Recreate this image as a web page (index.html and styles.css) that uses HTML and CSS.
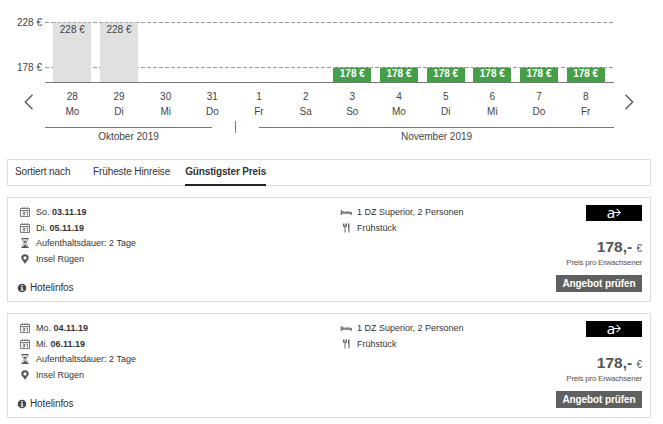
FILE: index.html
```html
<!DOCTYPE html>
<html lang="de">
<head>
  <meta charset="UTF-8">
  <meta name="viewport" content="width=device-width, initial-scale=1.0">
  <title>Preisübersicht</title>
  <link rel="stylesheet" href="styles.css">
</head>
<body>
  <!-- icons -->
  <svg class="sprite">
    <symbol id="calendar" viewBox="0 0 10 10">
      <path d="M.5 1.5h9v8h-9zM.5 3.5h9M2.5 0v2M5 0v2M7.5 0v2M2.5 5h2v3h-2M3 6.5h1.5M5.5 5h2v3.5" fill="none" stroke="#707070" stroke-width=".9"/>
    </symbol>
    <symbol id="hourglass" viewBox="0 0 10 10">
      <path d="M1.5 .7h7M1.5 9.3h7" stroke="#555" stroke-width="1.3"/>
      <path d="M2.5 1v1.5L4.4 5 2.5 7.5V9M7.5 1v1.5L5.6 5l1.9 2.5V9" fill="none" stroke="#777" stroke-width=".8"/>
      <path d="M3 2.7h4L5 5.2zM5 6l2 3H3z" fill="#555"/>
    </symbol>
    <symbol id="pin" viewBox="0 0 10 10">
      <path fill-rule="evenodd" d="M5 .3a3.7 3.7 0 0 0-3.7 3.7C1.3 6 4 7.5 5 9.9 6 7.5 8.7 6 8.7 4A3.7 3.7 0 0 0 5 .3zM5 2.3a1.6 1.6 0 1 1 0 3.2 1.6 1.6 0 0 1 0-3.2z" fill="#555"/>
    </symbol>
    <symbol id="info" viewBox="0 0 10 10">
      <circle cx="5" cy="5" r="4.3" fill="#4a4a4a"/>
      <path d="M4.3 2h1.5v1.3H4.3zM3.8 4.2h2v2.8h.6v.8H3.8V7h.6V5h-.6z" fill="#fff"/>
    </symbol>
    <symbol id="bed" viewBox="0 0 12 10">
      <path d="M1.3 3v5M11.2 5v3M.8 6.2h10.4" fill="none" stroke="#666" stroke-width="1.2"/>
      <path d="M1.5 4.2h2.5v1.5H1.5zM4.3 4.5h6l.9 1.2H4.3z" fill="#777"/>
    </symbol>
    <symbol id="meal" viewBox="0 0 10 10">
      <path d="M2.5 .5v3M4 .5v3M5.5 .5v3M2.5 3.5h3M4 3.5V9.500" fill="none" stroke="#666" stroke-width="1"/>
      <path d="M7 .5h1.5v9H7.4V5.5H7z" fill="#666"/>
    </symbol>
    <symbol id="logo-arrow" viewBox="0 0 8 10">
      <path d="M0 5h6.8M3 .8L7.2 5 3 9.2" fill="none" stroke="#fff" stroke-width="1.2"/>
    </symbol>
  </svg>

  <section class="chart">
    <div class="scale"><span>228 €</span><span>178 €</span></div>
    <div class="plot">
      <div class="col"><div class="bar high">228 €</div></div>
      <div class="col"><div class="bar high">228 €</div></div>
      <div class="col"></div>
      <div class="col"></div>
      <div class="col"></div>
      <div class="col"></div>
      <div class="col"><div class="bar best">178 €</div></div>
      <div class="col"><div class="bar best">178 €</div></div>
      <div class="col"><div class="bar best">178 €</div></div>
      <div class="col"><div class="bar best">178 €</div></div>
      <div class="col"><div class="bar best">178 €</div></div>
      <div class="col"><div class="bar best">178 €</div></div>
    </div>
    <svg class="arrow prev" viewBox="0 0 10 16"><path d="M8.5 .8L1.3 8l7.2 7.2"/></svg>
    <div class="days">
      <div>28<br>Mo</div>
      <div>29<br>Di</div>
      <div>30<br>Mi</div>
      <div>31<br>Do</div>
      <div>1<br>Fr</div>
      <div>2<br>Sa</div>
      <div>3<br>So</div>
      <div>4<br>Mo</div>
      <div>5<br>Di</div>
      <div>6<br>Mi</div>
      <div>7<br>Do</div>
      <div>8<br>Fr</div>
    </div>
    <svg class="arrow next" viewBox="0 0 10 16"><path d="M1.5 .8L8.7 8l-7.2 7.2"/></svg>
    <div class="months">
      <div class="month">Oktober 2019</div>
      <div class="divider"></div>
      <div class="month">November 2019</div>
    </div>
  </section>

  <nav class="sort">
    <span class="sort-label">Sortiert nach</span>
    <a class="tab">Früheste Hinreise</a>
    <a class="tab active">Günstigster Preis</a>
  </nav>

  <article class="offer">
    <div class="travel">
      <ul class="list">
        <li><svg class="icon"><use href="#calendar"/></svg><span>So. <b>03.11.19</b></span></li>
        <li><svg class="icon"><use href="#calendar"/></svg><span>Di. <b>05.11.19</b></span></li>
        <li><svg class="icon"><use href="#hourglass"/></svg><span>Aufenthaltsdauer: 2 Tage</span></li>
        <li><svg class="icon"><use href="#pin"/></svg><span>Insel Rügen</span></li>
      </ul>
      <a class="hotel"><svg class="icon"><use href="#info"/></svg>Hotelinfos</a>
    </div>
    <ul class="list room">
      <li><svg class="icon wide"><use href="#bed"/></svg><span>1 DZ Superior, 2 Personen</span></li>
      <li><svg class="icon wide"><use href="#meal"/></svg><span>Frühstück</span></li>
    </ul>
    <div class="price">
      <div class="logo">a<svg><use href="#logo-arrow"/></svg></div>
      <div class="amount">178,- <small>€</small></div>
      <div class="per">Preis pro Erwachsener</div>
      <a class="button">Angebot prüfen</a>
    </div>
  </article>

  <article class="offer">
    <div class="travel">
      <ul class="list">
        <li><svg class="icon"><use href="#calendar"/></svg><span>Mo. <b>04.11.19</b></span></li>
        <li><svg class="icon"><use href="#calendar"/></svg><span>Mi. <b>06.11.19</b></span></li>
        <li><svg class="icon"><use href="#hourglass"/></svg><span>Aufenthaltsdauer: 2 Tage</span></li>
        <li><svg class="icon"><use href="#pin"/></svg><span>Insel Rügen</span></li>
      </ul>
      <a class="hotel"><svg class="icon"><use href="#info"/></svg>Hotelinfos</a>
    </div>
    <ul class="list room">
      <li><svg class="icon wide"><use href="#bed"/></svg><span>1 DZ Superior, 2 Personen</span></li>
      <li><svg class="icon wide"><use href="#meal"/></svg><span>Frühstück</span></li>
    </ul>
    <div class="price">
      <div class="logo">a<svg><use href="#logo-arrow"/></svg></div>
      <div class="amount">178,- <small>€</small></div>
      <div class="per">Preis pro Erwachsener</div>
      <a class="button">Angebot prüfen</a>
    </div>
  </article>
</body>
</html>
```
FILE: styles.css
```css
*{
  box-sizing: border-box;
}
body{
  margin: 0; padding: 0 12px 0 7px;
  font-family: "Liberation Sans", Arial, sans-serif;
  font-size: 9px; color: #333;
  background-color: #fff;
}
.sprite{
  display: none;
}

/* price chart */
.chart{
  display: grid; grid-template-columns: 38px 569px 37px;
  grid-template-rows: 61px 38px 24px;
  padding-top: 22px; height: 159px;
  font-size: 10px; color: #444;
}
.scale{
  display: flex; flex-direction: column; gap: 33px;
  margin-top: -5px; padding-right: 3px;
  line-height: 12px; text-align: right;
}
.plot{
  display: grid; grid-template-columns: repeat(12, 1fr);
  grid-column: 2 / 4; width: 569px; height: 61px; padding: 0 5px 0 4px;
  border-bottom: 1px solid #777;
  background:
    repeating-linear-gradient(90deg, #999 0 4px, #fff 4px 6px) 0 0 / 100% 1px no-repeat,
    repeating-linear-gradient(90deg, #999 0 4px, #fff 4px 6px) 0 45px / 100% 1px no-repeat;
}
.col{
  display: flex; align-items: flex-end; justify-content: center;
}
.bar{
  width: 38px; text-align: center;
}
.high{
  height: 60px; line-height: 13px;
  background-color: #e0e0e0; border-top: 1px dashed #aaa;
}
.best{
  height: 15px; line-height: 12px;
  font-weight: bold; color: #fff;
  background-color: #43a047; border-top: 1px dashed #9bbf9d;
}
.arrow{
  width: 10px; height: 16px; margin-top: 11px;
  fill: none; stroke: #555; stroke-width: 1.3;
}
.prev{
  margin-left: 17px;
}
.next{
  margin-left: 10px;
}
.days{
  display: grid; grid-template-columns: repeat(12, 1fr);
  padding: 6px 5px 0 4px; line-height: 15px; text-align: center;
}
.months{
  display: flex; grid-column: 2; align-items: flex-start;
}
.month{
  flex: 0 0 355px; margin-top: 6px; padding-top: 3px;
  border-top: 1px solid #777;
  line-height: 12px; text-align: center;
}
.month:first-child{
  flex-basis: 167px;
}
.divider{
  width: 1px; height: 12px; margin: 0 23px;
  background-color: #777;
}

/* sorting */
.sort{
  display: flex; height: 27px; padding-left: 7px;
  border: 1px solid #ddd;
  font-size: 10px; line-height: 24px; letter-spacing: -0.1px;
}
.sort-label{
  width: 78px;
}
.tab{
  height: 26px; margin-right: 15px;
}
.active{
  font-weight: bold; letter-spacing: -0.15px;
  border-bottom: 2px solid #222;
}

/* offers */
.offer{
  display: flex; height: 105px; margin-top: 11px;
  border: 1px solid #ddd;
}
.travel{
  width: 332px; padding: 6px 0 0 9px;
}
.list{
  margin: 0; padding: 0; list-style: none;
}
.list li{
  display: flex; align-items: center; gap: 6px;
  height: 15.7px; padding-left: 3px;
}
.room{
  flex: 1; padding-top: 6px;
}
.room li{
  gap: 5px; padding-left: 0;
}
.icon{
  width: 10px; height: 10px;
}
.wide{
  width: 12px;
}
.hotel{
  display: flex; align-items: center; gap: 3px;
  margin-top: 14px; height: 14px;
  font-size: 10px; letter-spacing: -0.1px;
}
.price{
  display: flex; flex-direction: column; align-items: flex-end;
  padding: 7px 8px 0 0; color: #555;
}
.logo{
  display: flex; align-items: center; justify-content: center;
  width: 56px; height: 16px; padding-bottom: 3px;
  font: 15px/12px "Noto Sans", sans-serif; color: #fff;
  background-color: #000;
}
.logo svg{
  width: 7px; height: 9px; margin: 2px 0 0 -1px;
}
.amount{
  margin-top: 17px;
  font-size: 15.5px; font-weight: bold; line-height: 18px;
}
.amount small{
  font-size: 10px; font-weight: normal;
}
.per{
  font-size: 8px; line-height: 9px; letter-spacing: -0.25px;
}
.button{
  width: 86px; height: 17px; margin-top: 8px;
  font-size: 10px; font-weight: bold; line-height: 17px; text-align: center;
  letter-spacing: -0.1px;
  color: #fff; background-color: #606060;
}
```
